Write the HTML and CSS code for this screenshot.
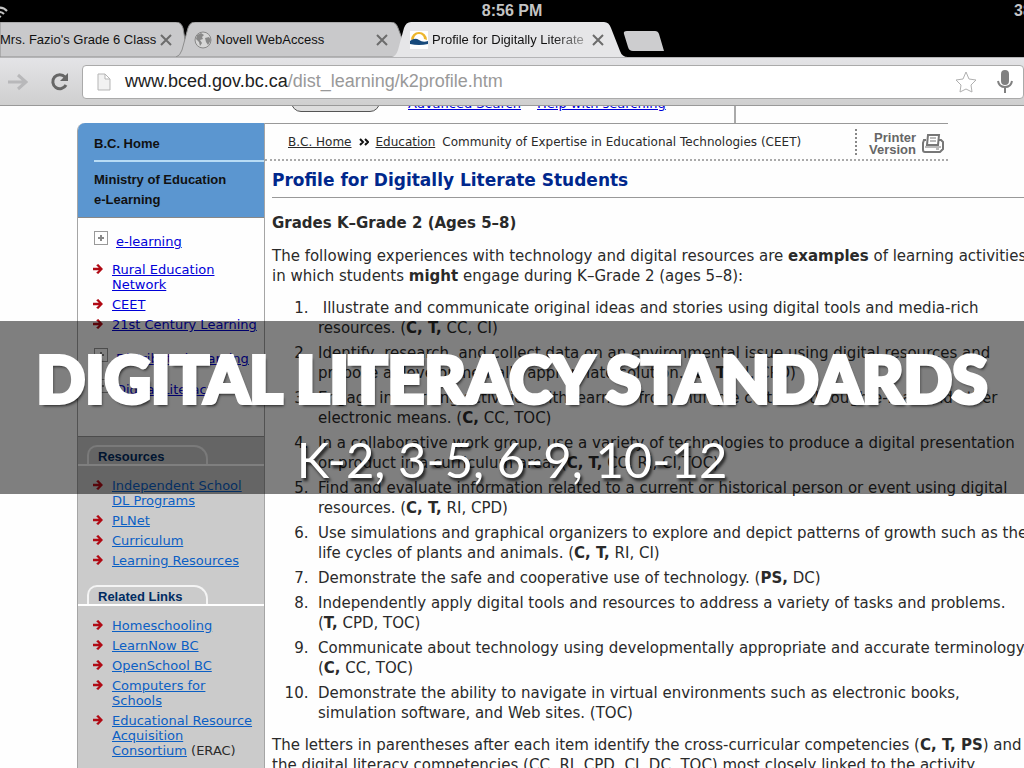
FILE: index.html
```html
<!DOCTYPE html>
<html lang="en">
<head>
    <meta charset="UTF-8">
    <meta name="viewport" content="width=device-width, initial-scale=1.0">
    <title>Digital Literacy Standards</title>
    <link rel="stylesheet" href="styles.css">
</head>
<body>
    <!-- Browser chrome -->
    <header class="browser">
        <div class="status-bar">
            <svg class="wifi" width="16" height="18" viewBox="0 0 16 18" fill="none" stroke="#c4c4c4" stroke-width="2">
                <path d="M-8 9A10 10 0 0 1 7 9M-5 12A6 6 0 0 1 4 12M-2 15A3 3 0 0 1 1 15"/>
            </svg>
            <span class="clock">8:56 PM</span>
            <span class="battery">38%</span>
        </div>

        <div class="tabs">
            <div class="tab tab-first">
                <svg class="tab-shape" viewBox="0 0 188 35" preserveAspectRatio="none"><path d="M0 0H176Q181 0 183 6L188 35H0Z"/></svg>
                <span class="tab-title">Mrs. Fazio's Grade 6 Class</span>
                <button class="close" aria-label="Close tab"><svg width="12" height="12" viewBox="0 0 12 12"><path d="M1 1L11 11M11 1L1 11"/></svg></button>
            </div>
            <div class="tab tab-second">
                <svg class="tab-shape" viewBox="0 0 228 35" preserveAspectRatio="none"><path d="M0 35Q4 34 6 28L12 6Q14 0 19 0H215Q220 0 222 6L228 22V35Z"/></svg>
                <svg class="favicon" width="18" height="18" viewBox="0 0 18 18"><circle cx="9" cy="9" r="8" fill="#d6d6d6" stroke="#888"/><path d="M3 4L7 2L10 4L8 6L9 8L6 9L8 12L6 15L5 11L2 8ZM11 7L15 6L17 9L14 14L12 11Z" fill="#888"/></svg>
                <span class="tab-title">Novell WebAccess</span>
                <button class="close" aria-label="Close tab"><svg width="12" height="12" viewBox="0 0 12 12"><path d="M1 1L11 11M11 1L1 11"/></svg></button>
            </div>
            <div class="tab tab-active">
                <svg class="tab-shape" viewBox="0 0 236 35" preserveAspectRatio="none"><path d="M0 35Q4 34 6 28L12 6Q14 0 19 0H212Q217 0 219 6L228 29Q230 35 236 35Z"/></svg>
                <svg class="favicon" width="18" height="18" viewBox="0 0 18 18"><path d="M0 0H18V18H0Z" fill="#fff"/><path d="M1 9A8 8 0 0 1 17 9L14 8A5 5 0 0 0 4 8Z" fill="#edb62c"/><path d="M0 10Q5 6 9 9T18 10V13Q9 15 0 13Z" fill="#174a7c"/></svg>
                <span class="tab-title fade">Profile for Digitally Literate</span>
                <button class="close" aria-label="Close tab"><svg width="12" height="12" viewBox="0 0 12 12"><path d="M1 1L11 11M11 1L1 11"/></svg></button>
            </div>
            <button class="new-tab" aria-label="New tab">
                <svg width="42" height="20" viewBox="0 0 42 20"><path d="M4 0H32Q35 0 36 3L41 20H10Q6 20 5 16L1 3Q0 0 4 0Z" fill="#cdcdcf"/></svg>
            </button>
        </div>

        <div class="toolbar">
            <button class="tool forward" aria-label="Forward"><svg width="20" height="18" viewBox="0 0 20 18" fill="none" stroke="#b8b8ba" stroke-width="3"><path d="M0 9H18M10 2L18 9L10 16"/></svg></button>
            <button class="tool reload" aria-label="Reload"><svg width="20" height="20" viewBox="0 0 20 20" fill="none" stroke="#666" stroke-width="3"><path d="M15 5A7 7 0 1 0 16 13"/><path d="M18 1V9H10Z" fill="#666" stroke="none"/></svg></button>
            <div class="address">
                <svg width="14" height="18" viewBox="0 0 14 18" fill="#f2f2f2" stroke="#b5b5b5"><path d="M1 1H8L13 6V17H1ZM8 1V6H13"/></svg>
                <a class="url" href="#">www.bced.gov.bc.ca<span>/dist_learning/k2profile.htm</span></a>
                <button class="tool" aria-label="Bookmark"><svg width="22" height="22" viewBox="0 0 22 22" fill="#fff" stroke="#b0b0b0"><path d="M11 1L14 8L21 9L16 14L17 21L11 18L5 21L6 14L1 9L8 8Z" stroke-linejoin="round"/></svg></button>
                <button class="tool mic" aria-label="Voice search"><svg width="16" height="23" viewBox="0 0 16 23" fill="none" stroke="#808080" stroke-width="2"><rect x="5" y="1" width="6" height="13" rx="3" fill="#808080"/><path d="M1 11Q2 17 8 17T15 11M8 17V23"/></svg></button>
            </div>
        </div>
    </header>

    <!-- Web page -->
    <div class="page">
        <div class="search-row">
            <button class="search-button">Search</button>
            <a href="#">Advanced Search</a>
            <a href="#">Help with searching</a>
        </div>

        <div class="columns">
            <nav class="sidebar">
                <div class="ministry">
                    <p class="home">B.C. Home</p>
                    <p class="section">Ministry of Education<br>e-Learning</p>
                </div>
                <ul class="links main-links">
                    <li class="expand"><a href="#">e-learning</a></li>
                    <li><a href="#">Rural Education<br>Network</a></li>
                    <li><a href="#">CEET</a></li>
                    <li><a href="#">21st Century Learning</a></li>
                    <li class="expand"><a href="#">Distributed Learning</a></li>
                    <li class="expand"><a href="#">Digital Literacy</a></li>
                </ul>
                <div class="extra">
                    <h3><span>Resources</span></h3>
                    <ul class="links">
                        <li><a href="#">Independent School<br>DL Programs</a></li>
                        <li><a href="#">PLNet</a></li>
                        <li><a href="#">Curriculum</a></li>
                        <li><a href="#">Learning Resources</a></li>
                    </ul>
                    <h3><span>Related Links</span></h3>
                    <ul class="links">
                        <li><a href="#">Homeschooling</a></li>
                        <li><a href="#">LearnNow BC</a></li>
                        <li><a href="#">OpenSchool BC</a></li>
                        <li><a href="#">Computers for<br>Schools</a></li>
                        <li><a href="#">Educational Resource<br>Acquisition<br>Consortium</a> (ERAC)</li>
                    </ul>
                </div>
            </nav>

            <main class="content">
                <div class="crumbs">
                    <a href="#">B.C. Home</a>
                    <svg class="chevrons" width="10" height="8" viewBox="0 0 10 8" fill="none" stroke="#111" stroke-width="2"><path d="M1 1L4 4L1 7M6 1L9 4L6 7"/></svg>
                    <a href="#">Education</a>
                    <span>Community of Expertise in Educational Technologies (CEET)</span>
                    <div class="printer">
                        <span>Printer<br>Version</span>
                        <svg width="22" height="20" viewBox="0 0 22 20" fill="#fff" stroke="#777" stroke-width="2"><path d="M4 6H2L1 9V16Q1 18 3 18H18L21 15V8L19 6H17"/><path d="M6 1H17L16 11H5Z"/><path d="M8 4H14M8 7H14M3 13H19M14 15H17" stroke-width="1"/></svg>
                    </div>
                </div>
                <h1>Profile for Digitally Literate Students</h1>
                <h2>Grades K–Grade 2 (Ages 5–8)</h2>
                <p>The following experiences with technology and digital resources are <b>examples</b> of learning activities<br>in which students <b>might</b> engage during K–Grade 2 (ages 5–8):</p>
                <ol>
                    <li>&nbsp;Illustrate and communicate original ideas and stories using digital tools and media-rich<br>resources. (<b>C, T,</b> CC, CI)</li>
                    <li>Identify, research, and collect data on an environmental issue using digital resources and<br>propose a developmentally appropriate solution. (<b>C, T,</b> RI, CPD)</li>
                    <li>Engage in learning activities with learners from multiple cultures through e-mail and other<br>electronic means. (<b>C,</b> CC, TOC)</li>
                    <li>In a collaborative work group, use a variety of technologies to produce a digital presentation<br>or product in a curriculum area. (<b>C, T,</b> CC, RI, CI,TOC)</li>
                    <li>Find and evaluate information related to a current or historical person or event using digital<br>resources. (<b>C, T,</b> RI, CPD)</li>
                    <li>Use simulations and graphical organizers to explore and depict patterns of growth such as the<br>life cycles of plants and animals. (<b>C, T,</b> RI, CI)</li>
                    <li>Demonstrate the safe and cooperative use of technology. (<b>PS,</b> DC)</li>
                    <li>Independently apply digital tools and resources to address a variety of tasks and problems.<br>(<b>T,</b> CPD, TOC)</li>
                    <li>Communicate about technology using developmentally appropriate and accurate terminology.<br>(<b>C,</b> CC, TOC)</li>
                    <li>Demonstrate the ability to navigate in virtual environments such as electronic books,<br>simulation software, and Web sites. (TOC)</li>
                </ol>
                <p>The letters in parentheses after each item identify the cross-curricular competencies (<b>C, T, PS</b>) and<br>the digital literacy competencies (CC, RI, CPD, CI, DC, TOC) most closely linked to the activity</p>
            </main>
        </div>
    </div>

    <!-- Slide caption over the page -->
    <div class="caption">
        <div class="caption-title">DIGITAL LITERACY STANDARDS</div>
        <div class="caption-text">K-2, 3-5, 6-9, 10-12</div>
    </div>
</body>
</html>
```
FILE: styles.css
```css
* {
    margin: 0;
    padding: 0;
    box-sizing: border-box;
}

body {
    position: relative;
    display: flex;
    flex-direction: column;
    height: 100vh;
    overflow: hidden;
    background: #fefefe;
    color: #2a2a2a;
    font-family: Verdana, "DejaVu Sans", sans-serif;
    white-space: nowrap;
}

button {
    border: none;
    background: none;
    cursor: pointer;
}

svg {
    display: block;
    flex-shrink: 0;
}

/* Browser */
.browser {
    flex-shrink: 0;
    background: #000;
    font-family: "Liberation Sans", Arial, sans-serif;
}

.status-bar {
    display: grid;
    grid-template-columns: 1fr auto 1fr;
    align-items: center;
    height: 22px;
    color: #c4c4c4;
    font-size: 16px;
    font-weight: bold;
}

.battery {
    justify-self: end;
    width: 10px;
}

.tabs {
    display: flex;
    height: 35px;
}

.tab {
    position: relative;
    display: flex;
    align-items: center;
    height: 35px;
    color: #111;
    font-size: 13px;
}

.tab-shape {
    position: absolute;
    inset: 0;
    width: 100%;
    height: 100%;
    fill: #c9c9cb;
    stroke: #8e8e8e;
}

.tab-title,
.favicon,
.close {
    position: relative;
}

.tab-title {
    flex: 1;
    overflow: hidden;
}

.tab-first {
    width: 188px;
    padding-right: 16px;
}

.tab-second {
    width: 228px;
    margin-left: -12px;
    padding: 0 16px 0 18px;
}

.tab-active {
    width: 236px;
    margin-left: -12px;
    padding: 0 24px 0 18px;
    z-index: 1;
}

.tab-active .tab-shape {
    fill: #e6e6e8;
    stroke: none;
}

.favicon {
    margin-right: 4px;
}

.fade {
    background: linear-gradient(90deg, #111 75%, #bbb);
    -webkit-background-clip: text;
    background-clip: text;
    color: transparent;
}

.close {
    padding: 0;
}

.close path {
    stroke: #6c6c6c;
    stroke-width: 2;
}

.new-tab {
    margin: 9px 0 0 -5px;
    height: 20px;
}

.toolbar {
    display: flex;
    align-items: center;
    gap: 22px;
    height: 49px;
    padding: 1px 0 1px 8px;
    background: linear-gradient(#e4e4e7, #cfcfcf);
    border-top: 1px solid #b4b4b6;
    border-bottom: 1px solid #999;
}

.address {
    display: flex;
    flex: 1;
    align-items: center;
    gap: 14px;
    height: 34px;
    margin-left: -10px;
    padding: 0 10px 0 14px;
    background: #fff;
    border: 1px solid #aaa;
    border-radius: 4px;
}

.url {
    flex: 1;
    color: #222;
    font-size: 18px;
    text-decoration: none;
}

.url span {
    color: #999;
}

.mic {
    margin-left: 6px;
}

/* Page */
.page {
    display: flex;
    flex: 1;
    flex-direction: column;
    min-height: 0;
    overflow: hidden;
}

/* scrolled halfway under the toolbar */
.search-row {
    display: flex;
    flex-shrink: 0;
    align-items: flex-start;
    gap: 16px;
    width: 659px;
    height: 17px;
    margin-left: 77px;
    padding-left: 214px;
    border-right: 2px solid #aaa;
    font-size: 13px;
    line-height: 16px;
}

.search-button {
    width: 89px;
    height: 24px;
    margin: -18px 12px 0 0;
    background: #ddd;
    border: 1px solid #555;
    border-radius: 10px;
    font-family: "DejaVu Sans", sans-serif;
    font-size: 13px;
}

.search-row a {
    margin-top: -10px;
}

.columns {
    display: flex;
    margin-left: 77px;
}

a {
    color: #0000d8;
}

/* Sidebar */
.sidebar {
    flex-shrink: 0;
    width: 188px;
    border: solid #a5a5a5;
    border-width: 0 1px;
    border-top-left-radius: 8px;
    font-size: 13px;
    line-height: 15px;
}

.ministry {
    height: 95px;
    padding: 11px 0 0 16px;
    background: #5b96d0;
    border-bottom: 1px solid #888;
    border-top-left-radius: 7px;
    color: #111;
    font-family: "Liberation Sans", Arial, sans-serif;
    font-weight: bold;
    line-height: 20px;
}

.home {
    padding-bottom: 6px;
    border-bottom: 2px solid #b8dcf5;
}

.section {
    padding-top: 8px;
}

.links {
    display: flex;
    flex-direction: column;
    gap: 5px;
    padding-left: 34px;
    list-style: none;
}

.links li {
    position: relative;
}

.links li::before {
    content: "";
    position: absolute;
    top: 2px;
    left: -19px;
    width: 10px;
    height: 10px;
    background: #b00a14;
    clip-path: polygon(0 38%, 58% 38%, 32% 12%, 52% 0, 100% 50%, 52% 100%, 32% 88%, 58% 62%, 0 62%);
}

.links .expand {
    margin-bottom: 8px;
    padding-left: 4px;
}

.links .expand::before {
    top: -3px;
    left: -18px;
    width: 12px;
    height: 12px;
    background:
        linear-gradient(#888, #888) center / 6px 2px no-repeat,
        linear-gradient(#888, #888) center / 2px 6px no-repeat;
    border: 1px solid #999;
    clip-path: none;
}

.main-links {
    height: 219px;
    padding-top: 16px;
    border-bottom: 1px solid #999;
}

.main-links li:nth-child(5) {
    margin: 14px 0 11px;
}

.extra {
    min-height: 340px;
    padding-top: 8px;
    background: #cbcbcb;
}

.extra h3 {
    height: 21px;
    margin-bottom: 12px;
    padding-left: 9px;
    border-bottom: 2px solid #fff;
    color: #002b62;
    font-family: "Liberation Sans", Arial, sans-serif;
    font-size: 13px;
    line-height: 20px;
}

.extra h3 span {
    display: block;
    width: 121px;
    height: 19px;
    padding-left: 9px;
    border: 2px solid #f4f4f4;
    border-bottom: none;
    border-radius: 10px 14px 0 0;
}

.extra ul + h3 {
    margin-top: 17px;
}

.extra a {
    color: #0b5fc4;
}

/* Content */
.content {
    flex: 1;
    min-width: 0;
    padding-left: 7px;
    font-size: 15px;
    line-height: 20px;
}

.crumbs {
    display: flex;
    align-items: center;
    width: 683px;
    height: 38px;
    margin-left: -7px;
    padding-left: 23px;
    border-top: 1px solid #999;
    border-bottom: 2px dotted #aaa;
    font-size: 12px;
}

.crumbs a {
    color: #2a2a2a;
}

.crumbs .chevrons {
    margin: 0 7px;
}

.crumbs a + span {
    margin-left: 7px;
}

.printer {
    display: flex;
    align-items: center;
    gap: 6px;
    height: 26px;
    margin-left: auto;
    padding: 4px 4px 0 12px;
    border-left: 2px dotted #888;
    color: #666;
    font-family: "Liberation Sans", Arial, sans-serif;
    font-size: 13px;
    font-weight: bold;
    line-height: 12px;
    text-align: right;
}

.content h1 {
    padding: 9px 0 7px;
    border-bottom: 1px solid #999;
    color: #00278c;
    font-size: 17px;
    line-height: 20px;
}

.content h2 {
    margin: 15px 0 13px;
    font-size: 15px;
    line-height: 20px;
}

.content ol {
    margin: 12px 0;
    padding-left: 46px;
}

.content li {
    margin-bottom: 5px;
}

.content li::marker {
    content: counter(list-item) ".\00a0\00a0";
}

/* Caption */
.caption {
    position: absolute;
    top: 321px;
    left: 0;
    right: 0;
    height: 173px;
    padding-top: 20px;
    background: rgba(0, 0, 0, 0.5);
    color: #fff;
    text-align: center;
    z-index: 2;
}

.caption-title {
    font-family: "Futura Condensed ExtraBold", Lato, sans-serif;
    font-size: 64px;
    font-weight: 900;
    line-height: 76px;
    -webkit-text-stroke: 4px #fff;
    text-shadow: 2px 3px 3px rgba(0, 0, 0, 0.7);
}

.caption-text {
    font-family: Futura, Lato, sans-serif;
    font-size: 49px;
    line-height: 84px;
    text-shadow: 2px 3px 3px rgba(0, 0, 0, 0.7);
}
```
